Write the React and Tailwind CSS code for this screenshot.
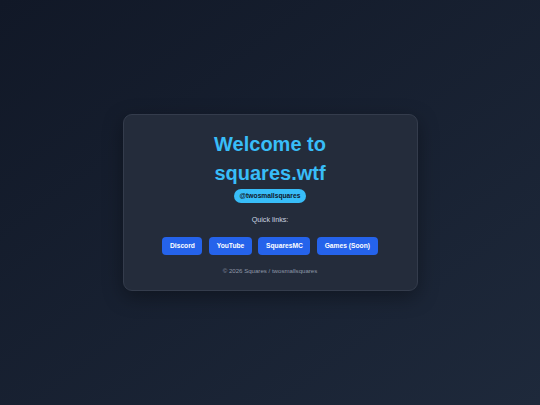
export default function App() {
  const links = ["Discord", "YouTube", "SquaresMC", "Games (Soon)"];

  return (
    <div
      className="flex h-screen w-full items-center justify-center bg-gradient-to-br from-[#111827] to-[#1e293b]"
      style={{ fontFamily: '"Liberation Sans", Arial, sans-serif' }}
    >
      <div className="flex w-[295px] flex-col items-center rounded-[9px] border border-[#343c4c] bg-[#242c3b] px-4 pt-[15px] pb-[15px] shadow-[0_6px_20px_rgba(0,0,0,0.35)]">
        <h1 className="text-center text-[20px] leading-[28.6px] font-bold text-[#38bdf8]">
          Welcome to
          <br />
          squares.wtf
        </h1>

        <span className="mt-[1.5px] inline-flex h-[14px] items-center rounded-full bg-[#38bdf8] px-[6px] text-[6.7px] font-bold text-[#0f172a]">
          @twosmallsquares
        </span>

        <p className="mt-[11px] text-[7.2px] leading-[11px] text-[#cbd5e1]">Quick links:</p>

        <div className="mt-[12px] flex gap-[6.6px]">
          {links.map((label) => (
            <a
              key={label}
              href="#"
              className="flex h-[17.6px] items-center rounded-[4px] bg-[#2563eb] px-[7.6px] text-[6.7px] font-bold text-white"
            >
              {label}
            </a>
          ))}
        </div>

        <p className="mt-[11px] text-[6.1px] leading-[9px] text-[#8f98a8]">
          © 2026 Squares / twosmallsquares
        </p>
      </div>
    </div>
  );
}
